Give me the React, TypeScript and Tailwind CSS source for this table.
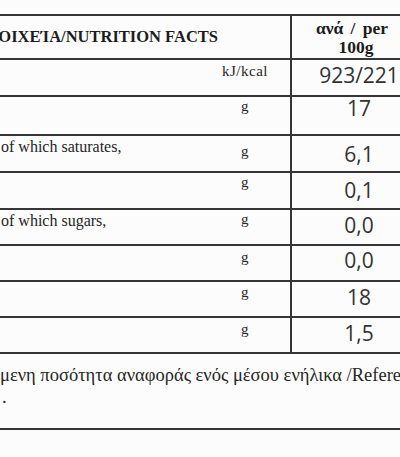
const rows = [
  { label: "", unit: "kJ/kcal", value: "923/221", h: "h-[37px]", unitPt: "pt-[2px]", valPt: "pt-[4px]" },
  { label: "", unit: "g", value: "17", h: "h-[39px]", unitPt: "pt-0", valPt: "pt-0" },
  { label: "of which saturates,", unit: "g", value: "6,1", h: "h-[37px]", unitPt: "pt-[6px]", valPt: "pt-[7px]" },
  { label: "", unit: "g", value: "0,1", h: "h-[37px]", unitPt: "pt-0", valPt: "pt-[6px]" },
  { label: "of which sugars,", unit: "g", value: "0,0", h: "h-[36px]", unitPt: "pt-0", valPt: "pt-[4px]" },
  { label: "", unit: "g", value: "0,0", h: "h-[36px]", unitPt: "pt-[2px]", valPt: "pt-[3px]" },
  { label: "", unit: "g", value: "18", h: "h-[36px]", unitPt: "pt-[1px]", valPt: "pt-[4px]" },
  { label: "", unit: "g", value: "1,5", h: "h-[36px]", unitPt: "pt-[2px]", valPt: "pt-[4px]" },
]

const serif = "font-['Liberation_Serif','Times_New_Roman',serif]"

export default function App() {
  return (
    <div className={`w-[400px] h-[457px] overflow-hidden bg-[#fcfcfc] pt-[14px] text-[#262626] ${serif}`}>
      <div className="w-[426px] border-t-2 border-[#363636]">
        {/* header */}
        <div className="flex h-[44px] border-b-2 border-[#363636]">
          <div className="w-[292px] shrink-0 flex items-center border-r-2 border-[#363636]">
            <div className="w-[218px] flex justify-end">
              <span className="whitespace-nowrap font-bold text-[16.5px] leading-[20px] text-[#1c1c1c]">
                ΣΤΟΙΧΕΊΑ/NUTRITION FACTS
              </span>
            </div>
          </div>
          <div className="flex-1 flex flex-col items-center justify-center pr-[14px] pt-[1px] font-bold text-[17.5px] leading-[19px] text-[#1c1c1c]">
            <span className="whitespace-nowrap [word-spacing:3px]">ανά / per</span>
            <span className="pl-[8px]">100g</span>
          </div>
        </div>

        {rows.map((r, i) => (
          <div key={i} className={`flex ${r.h} border-b-2 border-[#363636]`}>
            <div className="w-[292px] shrink-0 flex border-r-2 border-[#363636]">
              <div className="flex-1 pl-[1px] pt-[2px] text-[16px] leading-[18px] whitespace-nowrap">
                {r.label}
              </div>
              <div className={`w-[90px] text-center text-[15px] leading-[18px] tracking-[0.5px] ${r.unitPt}`}>
                {r.unit}
              </div>
            </div>
            <div className={`flex-1 text-center font-['Open_Sans',sans-serif] text-[21px] leading-[22px] text-[#333] ${r.valPt}`}>
              {r.value}
            </div>
          </div>
        ))}

        {/* footnote */}
        <div className="h-[76px] border-b-2 border-[#363636] pt-[10px] text-[18.5px] leading-[22px]">
          <div className="whitespace-nowrap">
            μενη ποσότητα αναφοράς ενός μέσου ενήλικα /Reference intake of an average adult
          </div>
          <div className="pl-[2px]">.</div>
        </div>
      </div>
    </div>
  )
}
